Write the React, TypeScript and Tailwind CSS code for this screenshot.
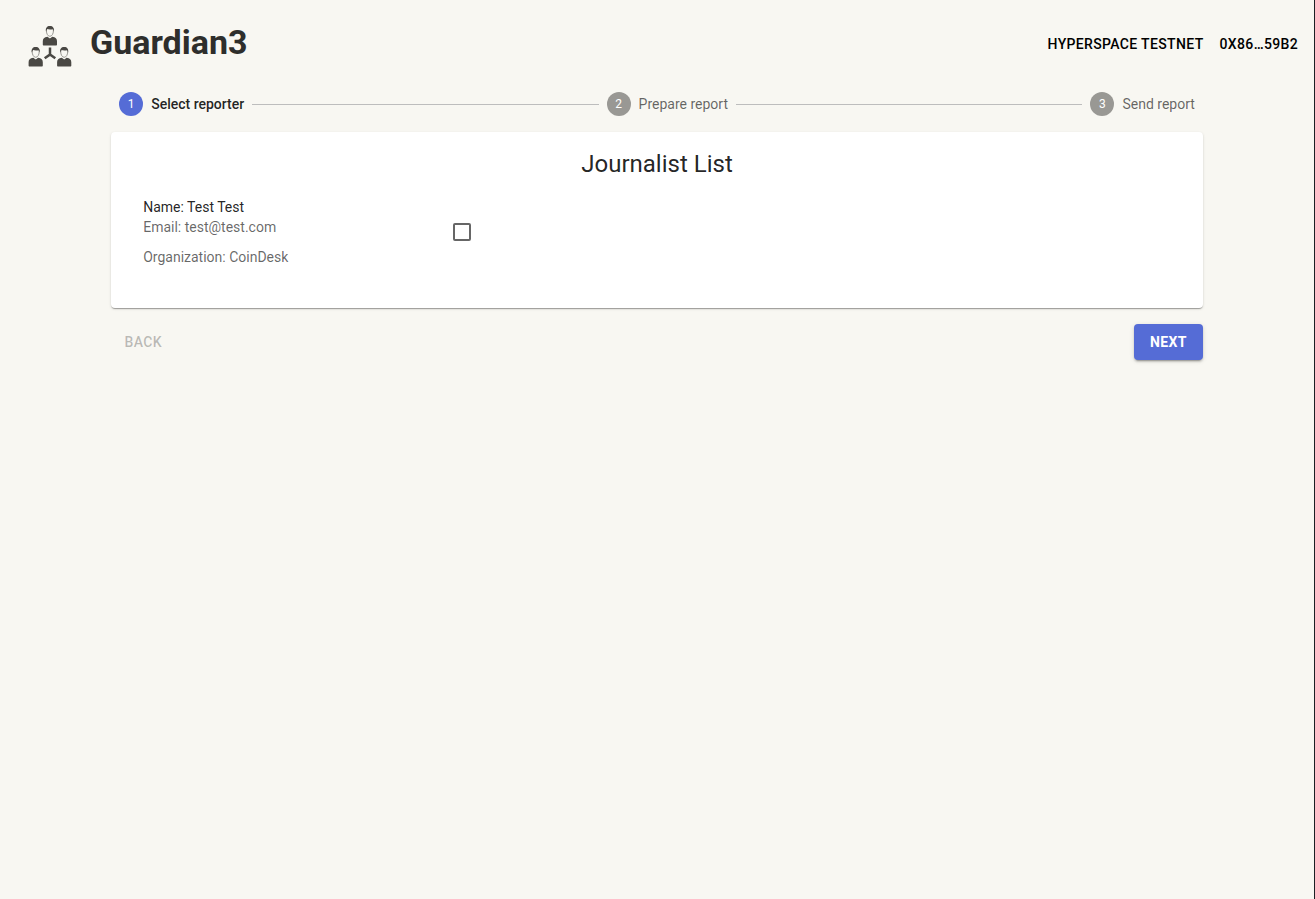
import React, { useState } from 'react';

const STEPS = ['Select reporter', 'Prepare report', 'Send report'];

const REPORTERS = [
  { id: 'test', name: 'Test Test', email: 'test@test.com', organization: 'CoinDesk' },
];

const Person: React.FC<{ x: number; y: number }> = ({ x, y }) => (
  <g transform={`translate(${x} ${y})`}>
    <path
      d="M.2 18.400v-3.200c0-2.700 1.300-3.800 4.700-4.500l2.400 1.400 2.400-1.400c3.400.7 4.700 1.800 4.700 4.500v3.200c0 .6-.4 1-1 1H1.200c-.6 0-1-.4-1-1z"
      fill="#4a4844"
    />
    <path d="M5.500 9.200h3.600v1.800l-1.800 1.500-1.800-1.500z" fill="#f8f7f2" />
    <path
      d="M3.800 4.800c0-2.500 1.300-4 3.500-4s3.500 1.500 3.500 4c0 2.900-1.500 5.500-3.500 5.500S3.800 7.700 3.800 4.800z"
      fill="#f8f7f2"
      stroke="#8f8d88"
      strokeWidth="0.9"
    />
    <path
      d="M3.400 5.400C2.700 1.900 4.400 0 7.300 0s4.600 1.900 3.900 5.400l-.9-2.200c-1.900.6-4.200.5-5.700-.1z"
      fill="#4a4844"
    />
  </g>
);

const Logo: React.FC = () => (
  <svg className="w-11 h-[42px]" viewBox="0 0 44 42" aria-hidden="true">
    <Person x={14.6} y={1} />
    <Person x={0.4} y={22} />
    <Person x={28.9} y={22} />
    <path d="M22 22.5v7l-5.300 3.800M22 29.500l5.300 3.800" fill="none" stroke="#4a4844" strokeWidth="2.5" />
  </svg>
);

const Stepper: React.FC<{ active: number }> = ({ active }) => (
  <ol className="flex items-center">
    {STEPS.map((label, index) => (
      <React.Fragment key={label}>
        {index > 0 && <li aria-hidden="true" className="flex-1 border-t border-[#bdbdbd]" />}
        <li className="flex items-center gap-2 px-2">
          <span
            className={
              index === active
                ? 'flex items-center justify-center w-6 h-6 rounded-full text-xs text-white bg-[#556cd6]'
                : 'flex items-center justify-center w-6 h-6 rounded-full text-xs text-white bg-[#999894]'
            }
          >
            {index + 1}
          </span>
          <span className={index === active ? 'font-medium text-black/87' : 'text-black/60'}>
            {label}
          </span>
        </li>
      </React.Fragment>
    ))}
  </ol>
);

const App: React.FC = () => {
  const [selected, setSelected] = useState('');

  return (
    <div className="min-h-screen bg-[#f8f7f2] border-r border-[#1c2024] font-[Roboto,sans-serif] text-sm text-black/87">
      <header className="flex items-center justify-between h-[92px] pl-7 pr-2">
        <div className="flex items-center gap-[18px]">
          <Logo />
          <h1 className="text-[34px] leading-10 font-bold text-[#2e2e2c] pb-2">Guardian3</h1>
        </div>
        <nav className="flex pb-1 text-black font-medium tracking-wide">
          <button type="button" className="px-2 py-2 uppercase">Hyperspace testnet</button>
          <button type="button" className="px-2 py-2 uppercase">0x86…59b2</button>
        </nav>
      </header>

      <div className="px-0.5">
        <main className="w-5/6 mx-auto">
          <Stepper active={0} />

          <section className="mt-4 p-4 pb-8 bg-white rounded shadow-[0_2px_1px_-1px_rgba(0,0,0,0.2),0_1px_1px_rgba(0,0,0,0.14),0_1px_3px_rgba(0,0,0,0.12)]">
            <h2 className="text-2xl text-center">Journalist List</h2>
            <ul className="mt-2">
              {REPORTERS.map((reporter) => (
                <li key={reporter.id} className="w-1/3">
                  <label className="flex items-center justify-between py-[9px] pl-4 pr-[9px]">
                    <span className="flex flex-col">
                      <span>Name: {reporter.name}</span>
                      <span className="text-black/60">Email: {reporter.email}</span>
                      <span className="mt-2.5 text-black/60">Organization: {reporter.organization}</span>
                    </span>
                    <input
                      type="checkbox"
                      checked={selected === reporter.id}
                      onChange={(e) => setSelected(e.target.checked ? reporter.id : '')}
                      className="appearance-none w-[18px] h-[18px] rounded-xs border-2 border-[#666666] checked:bg-[#556cd6] checked:border-[#556cd6]"
                    />
                  </label>
                </li>
              ))}
            </ul>
          </section>

          <div className="flex justify-between pt-4 font-medium tracking-wide">
            <button type="button" disabled className="min-w-16 h-9 px-2 uppercase text-black/26">
              Back
            </button>
            <button
              type="button"
              className="min-w-16 h-9 px-4 rounded uppercase font-bold text-white bg-[#556cd6] shadow-[0_3px_1px_-2px_rgba(0,0,0,0.2),0_2px_2px_rgba(0,0,0,0.14),0_1px_5px_rgba(0,0,0,0.12)]"
            >
              Next
            </button>
          </div>
        </main>
      </div>
    </div>
  );
};

export default App;
